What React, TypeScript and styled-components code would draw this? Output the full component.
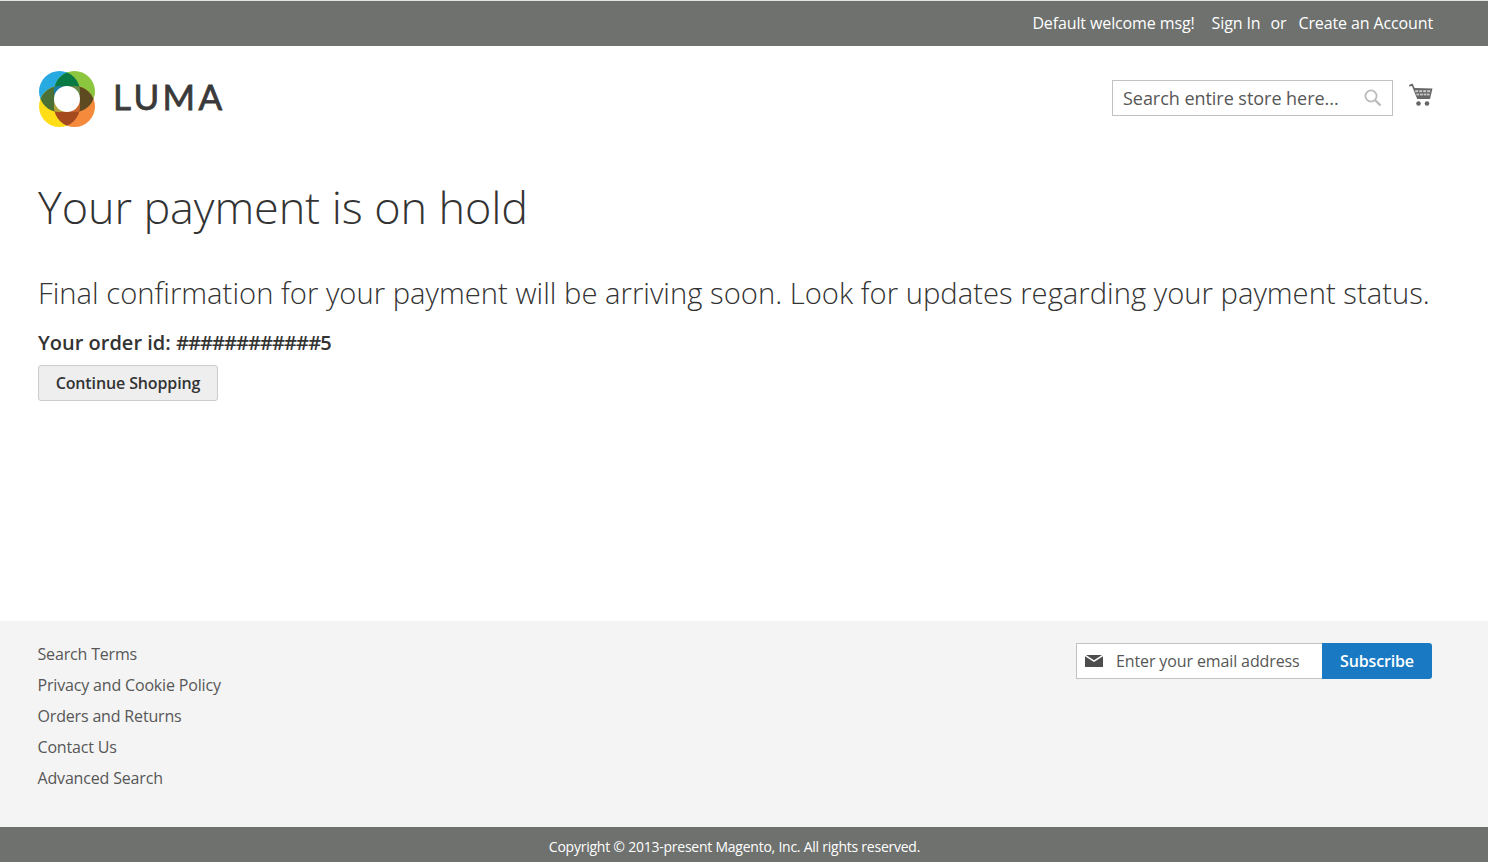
import React from "react";
import styled, { createGlobalStyle } from "styled-components";

const Global = createGlobalStyle`
  html, body { margin: 0; padding: 0; background: #fff; }
  body { font-family: "Open Sans", "Liberation Sans", sans-serif; color: #333; overflow: hidden; }
  * { box-sizing: border-box; }
`;

const Page = styled.div`
  height: 862px;
  display: flex;
  flex-direction: column;
`;

const TopBar = styled.div`
  height: 46px;
  flex: none;
  background: #6e716e;
  border-top: 1px solid #e4e5e4;
  display: flex;
  justify-content: flex-end;
  align-items: center;
  padding: 0 55px 2px 0;
  color: #fff;
  font-size: 16px;
  letter-spacing: -0.12px;
`;

const TopItem = styled.span<{ $gap: number }>`
  margin-left: ${(p) => p.$gap}px;
`;

const Header = styled.header`
  display: flex;
  justify-content: space-between;
  align-items: flex-start;
  padding: 24px 55px 0 38px;
  height: 100px;
  flex: none;
`;

const LogoLink = styled.div`
  display: block;
  width: 190px;
  height: 60px;
`;

const HeaderRight = styled.div`
  display: flex;
  align-items: flex-start;
  padding-top: 10px;
  gap: 16px;
`;

const SearchBox = styled.div`
  width: 281px;
  height: 36px;
  border: 1px solid #c2c2c2;
  display: flex;
  align-items: center;
  justify-content: space-between;
  padding: 0 10px;
  font-size: 18px;
  letter-spacing: -0.04px;
  color: #575757;
`;

const CartIcon = styled.svg`
  display: block;
  margin-top: 3px;
`;

const Main = styled.main`
  flex: 1;
  padding: 0 38px;
`;

const Title = styled.h1`
  margin: 30px 0 0;
  font-size: 45px;
  font-weight: 300;
  line-height: 62px;
  letter-spacing: -0.1px;
  color: #333;
`;

const Lead = styled.p`
  margin: 35px 0 0;
  font-size: 29.2px;
  font-weight: 300;
  line-height: 40px;
  letter-spacing: 0.02px;
  color: #333;
  white-space: nowrap;
`;

const OrderId = styled.p`
  margin: 16px 0 0;
  font-size: 20px;
  font-weight: 600;
  line-height: 27px;
  color: #333;
`;

const Masked = styled.span`
  letter-spacing: -0.9px;
`;

const Button = styled.button`
  display: block;
  margin-top: 9px;
  height: 36px;
  width: 180px;
  padding: 0;
  background: #eee;
  border: 1px solid #ccc;
  border-radius: 3px;
  font-family: inherit;
  font-size: 16px;
  font-weight: 600;
  letter-spacing: -0.12px;
  color: #333;
`;

const Footer = styled.footer`
  height: 206px;
  flex: none;
  background: #f4f4f4;
  display: flex;
  justify-content: space-between;
  align-items: flex-start;
  padding: 22px 56px 0 37.5px;
`;

const FooterLinks = styled.ul`
  list-style: none;
  margin: 0;
  padding: 0;
  display: flex;
  flex-direction: column;
  gap: 9px;
  font-size: 16px;
  line-height: 22px;
  letter-spacing: -0.17px;
  color: #575757;
`;

const Newsletter = styled.div`
  display: flex;
  height: 36px;
  width: 356px;
`;

const EmailBox = styled.div`
  flex: 1;
  background: #fff;
  border: 1px solid #c2c2c2;
  border-right: 0;
  display: flex;
  align-items: center;
  padding-left: 8px;
  gap: 13px;
  font-size: 16px;
  letter-spacing: -0.12px;
  color: #575757;
`;

const Subscribe = styled.button`
  width: 110px;
  height: 36px;
  padding: 0;
  border: 0;
  background: #1979c3;
  color: #fff;
  border-radius: 0 3px 3px 0;
  font-family: inherit;
  font-size: 16px;
  font-weight: 600;
  letter-spacing: -0.15px;
`;

const Copyright = styled.div`
  height: 35px;
  flex: none;
  background: #6e716e;
  color: #fff;
  display: flex;
  justify-content: center;
  align-items: center;
  padding: 4px 19px 0 0;
  font-size: 14px;
  letter-spacing: -0.24px;
`;

const Wordmark = styled.text`
  font-family: "Lato", "Open Sans", sans-serif;
  font-size: 35px;
  font-weight: 400;
  letter-spacing: 3.4px;
  fill: #3a3a3a;
  stroke: #3a3a3a;
  stroke-width: 0.8px;
`;

const B = { cx: 21.5, cy: 21.5 };
const Gr = { cx: 36.5, cy: 21.5 };
const Ye = { cx: 21.5, cy: 36.5 };
const Or = { cx: 36.5, cy: 36.5 };
const R = 20.5;

const Logo = () => (
  <svg width="190" height="60" viewBox="0 0 190 60" aria-label="Luma">
    <defs>
      <clipPath id="cb"><circle {...B} r={R} /></clipPath>
      <clipPath id="cg"><circle {...Gr} r={R} /></clipPath>
      <clipPath id="cy"><circle {...Ye} r={R} /></clipPath>
      <clipPath id="co"><circle {...Or} r={R} /></clipPath>
    </defs>
    <circle {...B} r={R} fill="#27a9e1" />
    <circle {...Gr} r={R} fill="#8cc63f" />
    <circle {...Ye} r={R} fill="#ffdd17" />
    <circle {...Or} r={R} fill="#f58a3c" />
    <g clipPath="url(#cb)"><circle {...Gr} r={R} fill="#0a7a45" /></g>
    <g clipPath="url(#cb)"><circle {...Ye} r={R} fill="#4a7035" /></g>
    <g clipPath="url(#cg)"><circle {...Or} r={R} fill="#5e4a20" /></g>
    <g clipPath="url(#cy)"><circle {...Or} r={R} fill="#a5491f" /></g>
    <g clipPath="url(#cb)"><g clipPath="url(#cg)"><circle {...Ye} r={R} fill="#1b7fa5" /></g></g>
    <g clipPath="url(#cg)"><g clipPath="url(#cb)"><circle {...Or} r={R} fill="#6a8c4a" /></g></g>
    <g clipPath="url(#cy)"><g clipPath="url(#cb)"><circle {...Or} r={R} fill="#b5a33c" /></g></g>
    <g clipPath="url(#co)"><g clipPath="url(#cg)"><circle {...Ye} r={R} fill="#c9662e" /></g></g>
    <circle cx="29" cy="29" r="13" fill="#fff" />
    <Wordmark x="75" y="40">LUMA</Wordmark>
  </svg>
);

const SearchIcon = () => (
  <svg width="18" height="18" viewBox="0 0 18 18" fill="none" stroke="#bbb">
    <circle cx="7" cy="7" r="5.6" strokeWidth="1.8" />
    <path d="M11 11 L16.5 16.5" strokeWidth="2.4" />
  </svg>
);

const Cart = () => (
  <CartIcon width="24" height="24" viewBox="0 0 24 24">
    <path d="M0 2 L3.6 0.4 L5.6 5 L23.5 5.6 L21 16 L8.2 16 L3 3 L0.6 3.6 Z" fill="#666" />
    <g fill="#c9c9c9">
      <rect x="6.2" y="7.2" width="3" height="2" />
      <rect x="10.2" y="7.2" width="3" height="2" />
      <rect x="14.2" y="7.2" width="3" height="2" />
      <rect x="18.2" y="7.2" width="3" height="2" />
      <rect x="7.4" y="10.6" width="2.8" height="1.8" />
      <rect x="11" y="10.6" width="2.8" height="1.8" />
      <rect x="14.6" y="10.6" width="2.8" height="1.8" />
      <rect x="18" y="10.6" width="2.6" height="1.8" />
    </g>
    <circle cx="9.5" cy="20.5" r="2.3" fill="#666" />
    <circle cx="18" cy="20.5" r="2.3" fill="#666" />
  </CartIcon>
);

const MailIcon = styled.svg`
  flex: none;
`;

const Mail = () => (
  <MailIcon width="18" height="12" viewBox="0 0 18 12">
    <path d="M0 1.2 L0 12 L18 12 L18 1.2 L9 7 Z" fill="#4d4d4d" />
    <path d="M1 0 L17 0 L9 5.3 Z" fill="#4d4d4d" />
  </MailIcon>
);

export default function App() {
  return (
    <Page>
      <Global />
      <TopBar>
        <TopItem $gap={0}>Default welcome msg!</TopItem>
        <TopItem $gap={17}>Sign In</TopItem>
        <TopItem $gap={10}>or</TopItem>
        <TopItem $gap={12}>Create an Account</TopItem>
      </TopBar>
      <Header>
        <LogoLink><Logo /></LogoLink>
        <HeaderRight>
          <SearchBox>
            <span>Search entire store here...</span>
            <SearchIcon />
          </SearchBox>
          <Cart />
        </HeaderRight>
      </Header>
      <Main>
        <Title>Your payment is on hold</Title>
        <Lead>Final confirmation for your payment will be arriving soon. Look for updates regarding your payment status.</Lead>
        <OrderId>Your order id: <Masked>############5</Masked></OrderId>
        <Button>Continue Shopping</Button>
      </Main>
      <Footer>
        <FooterLinks>
          <li>Search Terms</li>
          <li>Privacy and Cookie Policy</li>
          <li>Orders and Returns</li>
          <li>Contact Us</li>
          <li>Advanced Search</li>
        </FooterLinks>
        <Newsletter>
          <EmailBox><Mail />Enter your email address</EmailBox>
          <Subscribe>Subscribe</Subscribe>
        </Newsletter>
      </Footer>
      <Copyright>Copyright © 2013-present Magento, Inc. All rights reserved.</Copyright>
    </Page>
  );
}
